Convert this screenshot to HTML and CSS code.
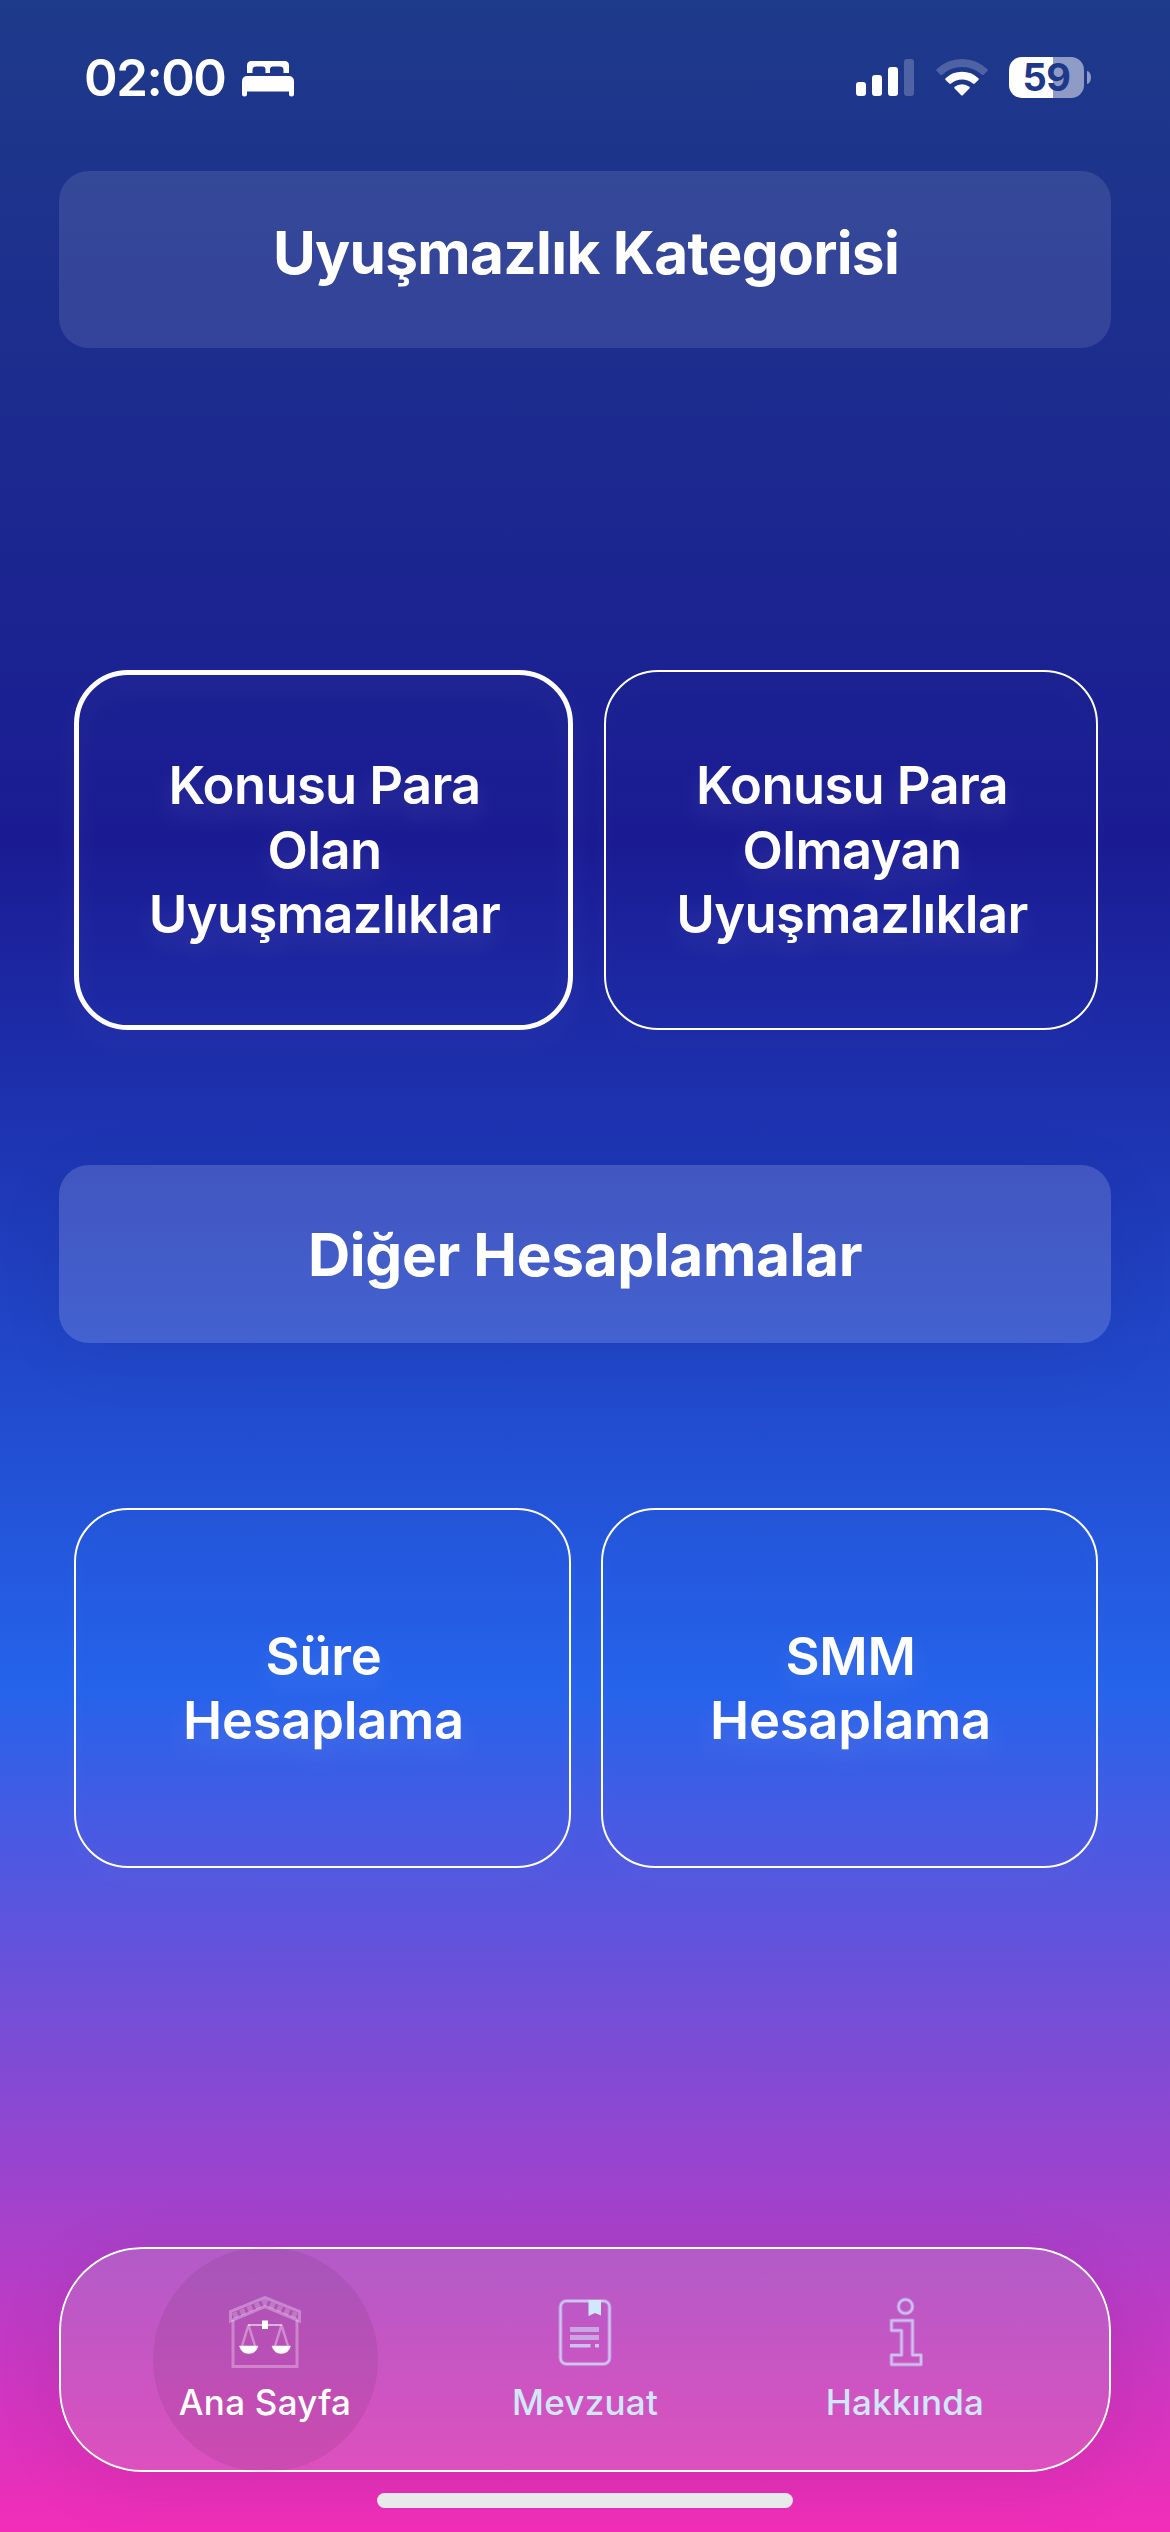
FILE: index.html
```html
<!DOCTYPE html>
<html lang="tr">
<head>
<meta charset="utf-8">
<title>Uyuşmazlık Kategorisi</title>
<link rel="stylesheet" href="styles.css">
</head>
<body>
<div class="screen">
  <header class="status">
    <div class="status-left">
      <span class="time">02:00</span>
      <svg class="bed" width="52" height="36" viewBox="0 0 52 36" fill="#fff">
        <path d="M5 12V4.500Q5 0 9.500 0H42.500Q47 0 47 4.500V12H41.500V9Q41.500 5.500 38 5.500H31Q28 5.500 28 8.500V12H23.500V8.500Q23.500 5.500 20.500 5.500H14Q10.500 5.500 10.500 9V12Z"/>
        <path d="M0 33V20.500Q0 15 5.500 15H46.500Q52 15 52 20.500V33Q52 35.500 49.500 35.500T47 33V30.500H5V33Q5 35.500 2.500 35.500T0 33Z"/>
      </svg>
    </div>
    <div class="status-right">
      <svg width="58" height="37" viewBox="0 0 58 37" fill="#fff">
        <rect x="0" y="23" width="10" height="14" rx="3"/>
        <rect x="16" y="16" width="10" height="21" rx="3"/>
        <rect x="32" y="8" width="10" height="29" rx="3"/>
        <rect x="48" y="0" width="10" height="37" rx="3" opacity=".22"/>
      </svg>
      <svg class="wifi" width="52" height="37" viewBox="0 0 52 37" fill="#fff">
        <path opacity=".22" d="M.6 10.300Q-.2 11.200.7 12.100L4.300 15.700Q5.200 16.500 6.100 15.700Q14.500 8 26 8T45.900 15.700Q46.800 16.500 47.700 15.700L51.300 12.100Q52.200 11.200 51.400 10.300Q40.500 0 26 0T.6 10.300Z"/>
        <path d="M9.600 19.200Q8.800 20.100 9.600 21L13.300 24.500Q14.200 25.300 15.100 24.500Q20 20.500 26 20.500T36.900 24.500Q37.800 25.300 38.700 24.500L42.400 21Q43.200 20.100 42.400 19.200Q35.500 12.800 26 12.800T9.600 19.200Z"/>
        <path d="M18.600 27.800Q17.800 28.700 18.600 29.500L25 36Q26 37 27 36L33.400 29.500Q34.200 28.700 33.400 27.800Q30 25.200 26 25.200T18.600 27.800Z"/>
      </svg>
      <div class="battery"><span class="battery-level">59</span></div>
      <span class="battery-cap"></span>
    </div>
  </header>

  <main>
    <h1 class="banner banner-top">Uyuşmazlık Kategorisi</h1>
    <section class="cards cards-dispute">
      <button class="card selected">Konusu Para<br>Olan<br>Uyuşmazlıklar</button>
      <button class="card">Konusu Para<br>Olmayan<br>Uyuşmazlıklar</button>
    </section>
    <h2 class="banner banner-other">Diğer Hesaplamalar</h2>
    <section class="cards cards-other">
      <button class="card">Süre<br>Hesaplama</button>
      <button class="card">SMM<br>Hesaplama</button>
    </section>
  </main>

  <nav class="tabs">
    <a class="tab active">
      <svg width="72" height="72" viewBox="0 0 72 72" fill="none" stroke="#fff">
        <path d="M4 24V70.500H68V24" stroke-width="3" stroke-opacity=".3"/>
        <path d="M1.500 25V15.500L36 1.500L70.500 15.500V25L36 10.500Z" stroke-width="3" stroke-opacity=".3"/>
        <path d="M4 20L36 6.500L68 20" stroke-width="6" stroke-opacity=".22" stroke-dasharray="5 3"/>
        <path d="M19 29H53" stroke-width="2" stroke-opacity=".55"/>
        <path d="M19.500 29L13 50M19.500 29L26 50M52.500 29L46 50M52.500 29L59 50" stroke-width="2.500" stroke-opacity=".35"/>
        <rect x="33" y="24.500" width="6" height="8.500" fill="#fff" stroke="none"/>
        <path d="M10.500 50H29Q27 57.500 19.700 57.500T10.500 50ZM43 50H61.500Q59.500 57.500 52.300 57.500T43 50Z" fill="#fff" stroke-width="1" stroke-opacity=".5"/>
      </svg>
      <span>Ana Sayfa</span>
    </a>
    <a class="tab">
      <svg width="72" height="72" viewBox="0 0 72 72" fill="none" stroke="#d0e8ff">
        <rect x="11.500" y="5" width="49" height="63" rx="6" stroke-width="4" stroke-opacity=".35"/>
        <rect x="11.500" y="5" width="49" height="63" rx="6" stroke-width="2" stroke-opacity=".65"/>
        <path d="M39.500 4H52V19.500L46 17L39.500 20Z" fill="#d0e8ff" stroke="none"/>
        <path d="M21 33.500H50M21 41.500H50" stroke-width="5" stroke-opacity=".55"/>
        <path d="M21 49.700H41.500M46 49.700H50" stroke-width="3.500" stroke-opacity=".75"/>
      </svg>
      <span>Mevzuat</span>
    </a>
    <a class="tab">
      <svg width="72" height="72" viewBox="0 0 72 72" fill="none" stroke="#d0e8ff" stroke-linejoin="round">
        <g stroke-width="4" stroke-opacity=".35">
          <circle cx="36.500" cy="10.500" r="7"/>
          <path d="M22.500 24.500H43.500V59H52V68.500H22.500V59H32.500V34.500H22.500Z"/>
        </g>
        <g stroke-width="2" stroke-opacity=".6">
          <circle cx="36.500" cy="10.500" r="7"/>
          <path d="M22.500 24.500H43.500V59H52V68.500H22.500V59H32.500V34.500H22.500Z"/>
        </g>
      </svg>
      <span>Hakkında</span>
    </a>
  </nav>
  <div class="home-indicator"></div>
</div>
</body>
</html>
```
FILE: styles.css
```css
* { box-sizing: border-box; }

body {
  margin: 0;
  font-family: Inter, "Liberation Sans", sans-serif;
  color: #fff;
}

.screen {
  width: 1170px;
  height: 2532px;
  display: flex;
  flex-direction: column;
  overflow: hidden;
  background: linear-gradient(180deg, #1e3a8a 0%, #1a1b93 33.3%, #2563eb 66.600%, #f22db8 100%);
}

.status {
  display: flex;
  justify-content: space-between;
  height: 171px;
  padding: 57px 79px 0 84px;
}

.status-left,
.status-right { display: flex; align-items: flex-start; }

.time {
  width: 158px;
  font-size: 51px;
  line-height: 42px;
  font-weight: 600;
  letter-spacing: -1.500px;
}

.bed { margin-top: 4px; }
.status-right > svg { margin-top: 2px; }
.status-right .wifi { margin-left: 22px; }

.battery {
  width: 75px;
  height: 41px;
  margin-left: 21px;
  border-radius: 13px;
  background: linear-gradient(90deg, #fff 44px, rgba(255, 255, 255, .5) 44px);
  text-align: center;
}

.battery-level {
  color: #1e388a;
  font-size: 38px;
  line-height: 41px;
  font-weight: 700;
  letter-spacing: -.5px;
}

.battery-cap {
  width: 4px;
  height: 13px;
  margin: 14px 0 0 3px;
  border-radius: 0 4px 4px 0 / 0 6.500px 6.500px 0;
  background: rgba(255, 255, 255, .5);
}

main { padding: 0 59px; }

.banner {
  display: flex;
  justify-content: center;
  align-items: center;
  margin: 0;
  border-radius: 30px;
  font-size: 58.500px;
  font-weight: 700;
}

.banner-top {
  height: 177px;
  padding: 0 0 14px 2px;
  background: rgba(255, 255, 255, .105);
  letter-spacing: -.700px;
}

.banner-other {
  height: 178px;
  background: rgba(255, 255, 255, .155);
  box-shadow: 0 12px 72px rgba(0, 0, 0, .06);
  letter-spacing: -.350px;
}

.cards {
  display: flex;
  justify-content: space-between;
  padding: 0 13px 0 15px;
}

.cards-dispute { margin: 322px 0 135px; }
.cards-other { margin: 165px 0 0; }

.card {
  width: 497px;
  height: 360px;
  padding: 0 0 0 2px;
  border: 2px solid #fff;
  border-radius: 54px;
  background: none;
  color: #fff;
  font: 600 52.500px/64.500px Inter, "Liberation Sans", sans-serif;
  letter-spacing: -.250px;
  text-align: center;
  filter: drop-shadow(0 12px 12px rgba(255, 255, 255, .1));
}

.cards-dispute .card { width: 494px; letter-spacing: -.650px; }
.cards-dispute .selected { width: 499px; border-width: 5px; }

.tabs {
  display: flex;
  justify-content: center;
  gap: 95px;
  width: 1052px;
  height: 225px;
  margin: 379px 59px 0;
  border-radius: 83px;
  background:
    linear-gradient(rgba(255, 255, 255, .165), rgba(255, 255, 255, .165)),
    rgba(0, 0, 0, .055);
  box-shadow: inset 0 0 0 2px #fff, 0 12px 72px rgba(0, 0, 0, .08);
}

.tab {
  display: flex;
  flex-direction: column;
  align-items: center;
  width: 225px;
  padding-top: 49px;
  border-radius: 50%;
  color: #d0e8ff;
  font-size: 35px;
  line-height: 44px;
  font-weight: 500;
  letter-spacing: .250px;
}

.tab span { margin-top: 12px; white-space: nowrap; }
.tab.active { color: #fff; background: rgba(0, 0, 0, .065); }

.home-indicator {
  width: 416px;
  height: 15px;
  margin: 21px auto 0;
  border-radius: 8px;
  background: #e9e9e9;
}
```
